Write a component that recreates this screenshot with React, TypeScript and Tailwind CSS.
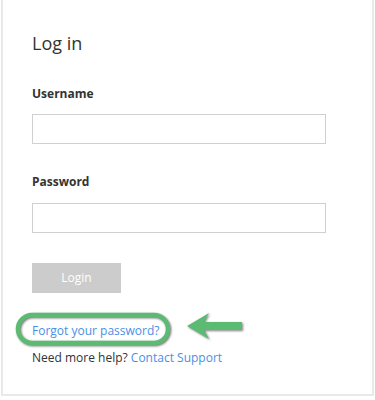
import React from "react";

export default function App() {
  return (
    <div className="w-[375px] h-[400px] bg-white overflow-hidden" style={{ fontFamily: '"Open Sans", sans-serif' }}>
      <div className="ml-px w-[373px] h-[396px] border-x-2 border-b-2 border-[#e9e9e9] bg-white pl-[29px] pt-[29px]">
        <h1 className="text-[18px] leading-[28px] text-[#333333] font-normal">Log in</h1>
        <div className="mt-[28px] text-[12px] leading-[18px] font-bold text-[#333333]">Username</div>
        <input className="mt-[11px] block w-[294px] h-[30px] border border-[#d0d0d0] bg-white outline-none" />
        <div className="mt-[29px] text-[12px] leading-[18px] font-bold text-[#333333]">Password</div>
        <input type="password" className="mt-[12px] block w-[294px] h-[30px] border border-[#d0d0d0] bg-white outline-none" />
        <button className="mt-[30px] block w-[89px] h-[30px] bg-[#cccccc] text-white text-[12px]">Login</button>
        <div className="relative mt-[29px] text-[12px] leading-[18px]">
          <a className="text-[#4a8fe7] relative z-10">Forgot your password?</a>
          <svg className="absolute left-[-17px] top-[-10px] pointer-events-none" width="160" height="38" viewBox="0 0 160 38" style={{ filter: "drop-shadow(1.5px 1.5px 1px rgba(0,0,0,0.55))" }}>
            <rect x="3" y="3" width="150" height="28" rx="14" fill="none" stroke="#5cbb72" strokeWidth="4.5" />
          </svg>
          <svg className="absolute left-[153px] top-[-11px] pointer-events-none" width="62" height="36" viewBox="0 0 62 36" style={{ filter: "drop-shadow(1.5px 1.5px 1px rgba(0,0,0,0.5))" }}>
            <polygon points="2,15 24,2 19,11 57,11 57,19 19,19 24,28" fill="#5cbb72" />
          </svg>
        </div>
        <div className="mt-[9px] text-[12px] leading-[18px] text-[#333333]">
          Need more help? <a className="text-[#4a8fe7]">Contact Support</a>
        </div>
      </div>
    </div>
  );
}
